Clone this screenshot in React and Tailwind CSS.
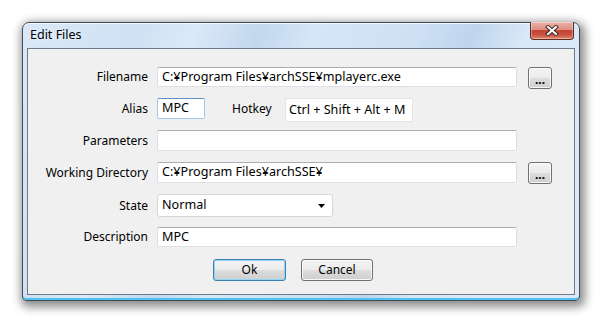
// App.jsx
// Vista-style "Edit Files" dialog

import React from 'react'

const field = "h-[20px] bg-white border border-[#dcdfe5] border-t-[#abadb3] rounded-[2px] px-[4px] flex items-center text-black text-[12.6px]"
const btn =
  "border border-[#707070] rounded-[3px] flex items-center justify-center text-black " +
  "bg-[linear-gradient(#f3f3f3_0%,#ebebeb_50%,#dddddd_50%,#cfcfcf_100%)] shadow-[inset_0_0_0_1px_rgba(255,255,255,0.8)]"

function Label({ children, h = 'h-[20px]' }) {
  return (
    <div className={`w-[120px] ${h} flex items-center justify-end text-black`}>{children}</div>
  )
}

function Browse() {
  return (
    <button className={`${btn} ml-[11px] w-[24px] h-[22px] font-bold text-[#1f4f9a] leading-none pt-[4px]`}>
      ...
    </button>
  )
}

export default function App() {
  return (
    <div className="w-[604px] h-[324px] bg-white overflow-hidden font-['Noto_Sans','Liberation_Sans',sans-serif] text-[12px] pt-[22px] pl-[22px]">
      <div className="relative w-[558px] h-[279px] rounded-t-[7px] rounded-b-[4px] border border-[#414b57] px-[4px] pb-[5px] flex flex-col
        bg-[linear-gradient(112deg,#d9e8f7_0%,#cfe1f3_18%,#dbe9f8_26%,#c2d7ee_36%,#d5e6f7_44%,#cde0f4_60%,#bfd5ed_68%,#d9e8f8_76%,#dce9f7_100%)]
        shadow-[inset_0_-2px_0_#4fc3f0,inset_0_1px_0_rgba(255,255,255,0.8),2px_3px_10px_3px_rgba(0,0,0,0.45)]">
        {/* title bar */}
        <div className="h-[25px] shrink-0 pl-[3px] pt-[4px] leading-[16px] text-black text-[12.5px] [text-shadow:0_0_6px_rgba(255,255,255,0.9)]">
          Edit Files
        </div>

        {/* close */}
        <div className="absolute top-[-1px] right-[5px] w-[44px] h-[18px] rounded-b-[4px] border border-[#5b2c26] border-t-0 flex items-center justify-center
          bg-[linear-gradient(#eab3a8_0%,#dd8f80_45%,#c34634_50%,#c8503e_75%,#e08a6a_100%)] shadow-[inset_0_0_0_1px_rgba(255,255,255,0.35)]">
          <svg width="14" height="11" viewBox="0 0 14 11">
            <path d="M3 2 L11 9 M11 2 L3 9" stroke="#3a2a2a" strokeWidth="4" strokeLinecap="square" />
            <path d="M3 2 L11 9 M11 2 L3 9" stroke="#ffffff" strokeWidth="2" strokeLinecap="square" />
          </svg>
        </div>

        {/* client area */}
        <div className="flex-1 bg-[#f0f0f0] border border-[#6f7b88] pt-[18px] flex flex-col">
          <div className="h-[31px] flex items-start">
            <Label>Filename</Label>
            <div className={`${field} ml-[9px] w-[360px]`}>C:¥Program Files¥archSSE¥mplayerc.exe</div>
            <Browse />
          </div>

          <div className="h-[32px] flex items-start">
            <Label h="h-[21px]">Alias</Label>
            <div className="ml-[9px] w-[48px] h-[21px] bg-white border border-[#a6c8e6] border-t-[#5b93c8] rounded-[2px] px-[4px] flex items-center text-[12.6px]">MPC</div>
            <div className="ml-[27px] w-[53px] h-[21px] flex items-center">Hotkey</div>
            <div className="w-[128px] h-[24px] bg-white border border-[#e4e4e4] px-[3px] flex items-center text-[12.6px]">Ctrl + Shift + Alt + M</div>
          </div>

          <div className="h-[32px] flex items-start">
            <Label h="h-[21px]">Parameters</Label>
            <div className={`${field} ml-[9px] w-[360px] h-[21px]`} />
          </div>

          <div className="h-[32px] flex items-start">
            <Label h="h-[21px]">Working Directory</Label>
            <div className={`${field} ml-[9px] w-[360px] h-[21px]`}>C:¥Program Files¥archSSE¥</div>
            <Browse />
          </div>

          <div className="h-[33px] flex items-start">
            <Label h="h-[23px]">State</Label>
            <div className="ml-[9px] w-[176px] h-[23px] bg-white border border-[#d6d6d6] rounded-[3px] pl-[4px] pr-[7px] flex items-center justify-between text-[12.6px]">
              <span>Normal</span>
              <svg width="7" height="4" viewBox="0 0 7 4"><path d="M0 0 H7 L3.5 4 Z" fill="#000" /></svg>
            </div>
          </div>

          <div className="h-[32px] flex items-start">
            <Label>Description</Label>
            <div className={`${field} ml-[9px] w-[360px]`}>MPC</div>
          </div>

          <div className="flex items-start pl-[185px] gap-[15px]">
            <button className="w-[73px] h-[22px] rounded-[3px] border border-[#3c7fb1] flex items-center justify-center text-black
              bg-[linear-gradient(#f3f3f3_0%,#ebebeb_50%,#dddddd_50%,#cfcfcf_100%)] shadow-[inset_0_0_0_1px_#8fd6f7]">
              Ok
            </button>
            <button className={`${btn} w-[72px] h-[22px]`}>Cancel</button>
          </div>
        </div>
      </div>
    </div>
  )
}
